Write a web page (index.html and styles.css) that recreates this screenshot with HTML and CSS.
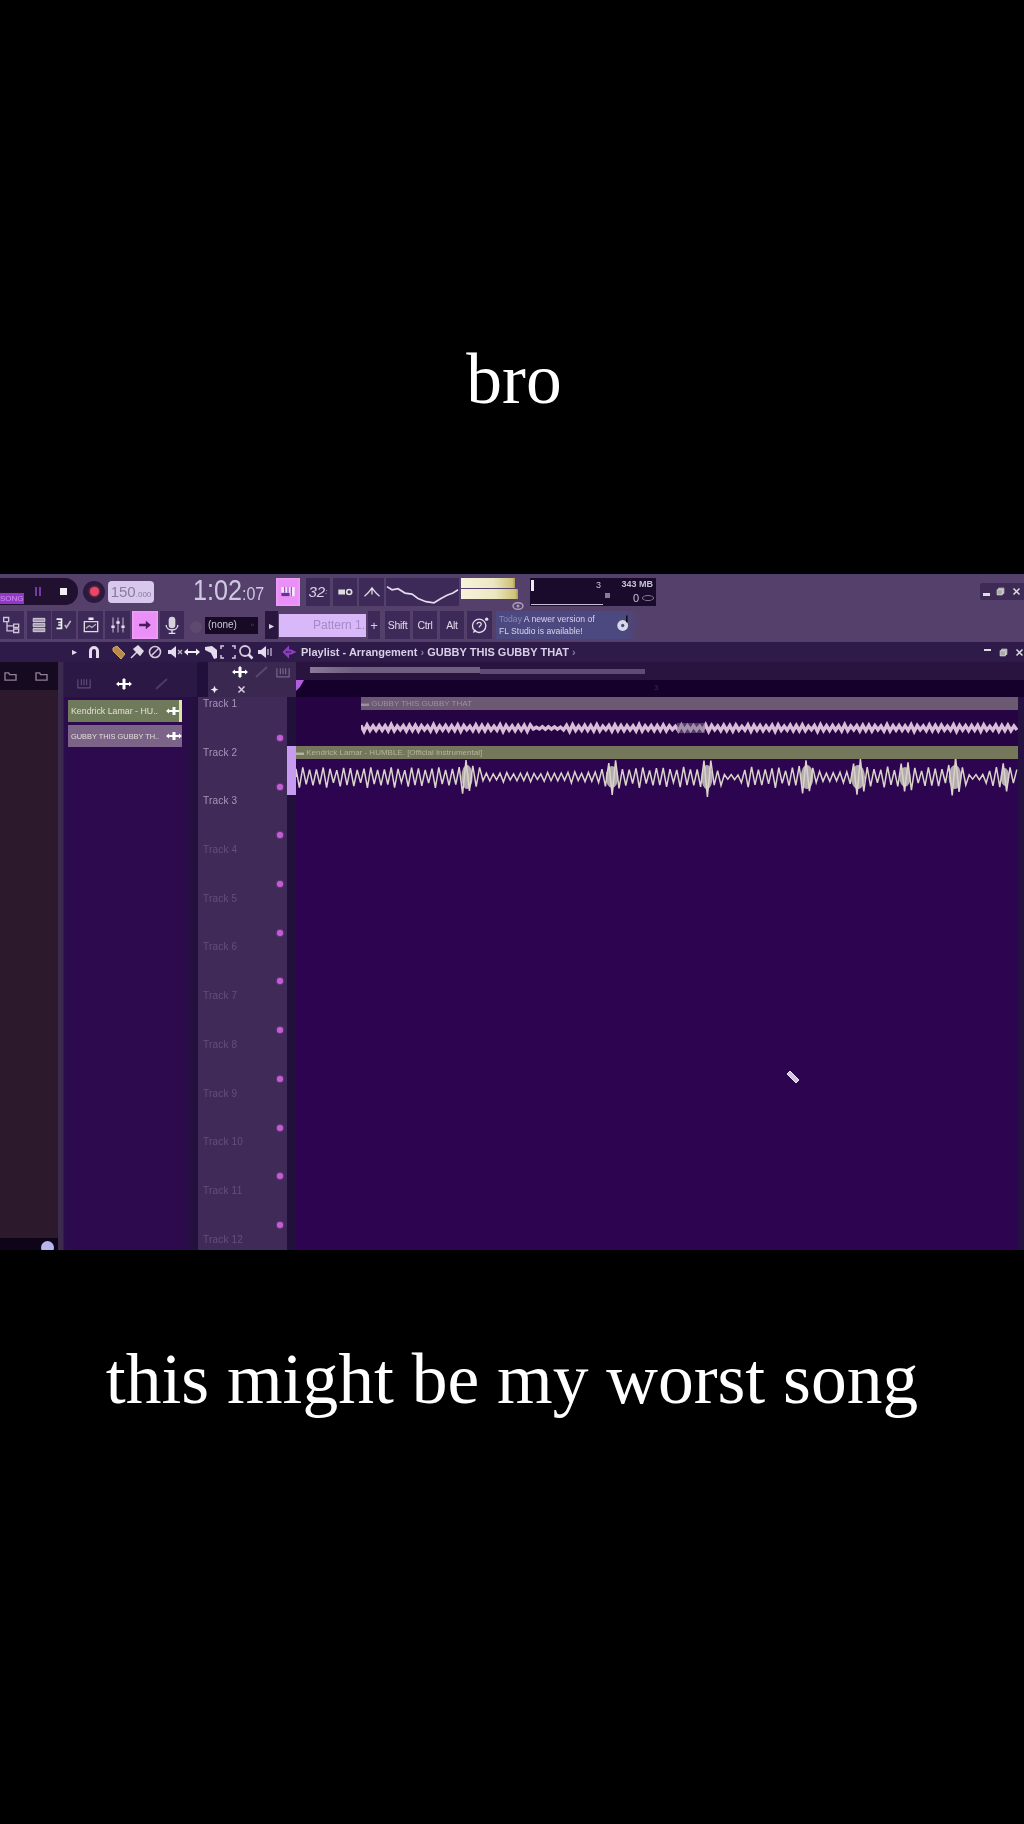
FILE: index.html
```html
<!DOCTYPE html>
<html lang="en">
<head>
<meta charset="utf-8">
<title>this might be my worst song</title>
<link rel="stylesheet" href="styles.css">
</head>
<body>
<div class="page">
  <div class="cap cap-top">bro</div>

  <div class="daw">
    <div class="toolbar">
      <div class="row row1">
        <div class="transport">
          <span class="song">SONG</span>
          <span class="pause"></span>
          <span class="stop"></span>
        </div>
        <div class="rec ml5"><span></span></div>
        <div class="tempo ml3">150<small>.000</small></div>
        <div class="time"><span>1:02<small>:07</small></span></div>
        <div class="btn hot w24 ml13"><svg viewBox="0 0 24 24"><path d="M4 6h16v11H4z" fill="#f9e6ff"/><path d="M4 13h10v4H4z" fill="#6b2f9c"/><path d="M8 6v7M12 6v7M16 6v11" stroke="#a04ac0" stroke-width="1.5"/></svg></div>
        <div class="btn w24 ml6 btn-text">32<small>:</small></div>
        <div class="btn w24 ml3"><svg viewBox="0 0 24 24"><path d="M4 9h8v6H4z" fill="#ddd"/><circle cx="17" cy="12" r="3" fill="none" stroke="#ddd" stroke-width="2"/></svg></div>
        <div class="btn w25 ml2"><svg viewBox="0 0 24 24"><path d="M3 17C8 13 10 10 12 7c2 3 4 6 9 10M12 7v8" fill="none" stroke="#ddd" stroke-width="1.6"/></svg></div>
        <div class="btn w73 ml2"><svg class="fill" viewBox="0 0 73 26" preserveAspectRatio="none"><path d="M1 8l5 3 6-1 7 4 7 1 6 4 8 3 8 1 7-4 6-3 6-2 5-3" fill="none" stroke="#e6dcef" stroke-width="1.6"/></svg></div>
        <div class="meter ml2"><span></span><span></span><svg class="eye" viewBox="0 0 12 8"><ellipse cx="6" cy="4" rx="5" ry="3.3" fill="none" stroke="#a99bb8" stroke-width="1.5"/><circle cx="6" cy="4" r="1.5" fill="#a99bb8"/></svg></div>
        <div class="cpu ml12">
          <span class="cpu-tick"></span>
          <span class="cpu-poly">3</span>
          <span class="cpu-mem">343 MB</span>
          <span class="cpu-dot"></span>
          <span class="cpu-zero">0</span>
          <span class="cpu-oval"></span>
          <span class="cpu-line"></span>
        </div>
        <div class="winctl">
          <span class="wmin"></span>
          <svg viewBox="0 0 12 12"><path d="M1.5 3.5h7v7h-7zM3.5 3.5v-2h7v7h-2" fill="#aaa" stroke="#ddd"/></svg>
          <svg viewBox="0 0 12 12"><path d="M2 2l8 8M10 2l-8 8" stroke="#ddd" stroke-width="2"/></svg>
        </div>
      </div>

      <div class="row row2">
        <div class="btn w24"><svg viewBox="0 0 24 24"><path d="M2 3h6v5H2zM6 8v5h8M6 13v6h8M14 11h6v4h-6zM14 17h6v4h-6z" fill="none" stroke="#cfc4d8" stroke-width="1.6"/></svg></div>
        <div class="btn w24 ml3"><svg viewBox="0 0 24 24"><path d="M5 4h14v4H5zM5 10h14v4H5zM5 16h14v4H5z" fill="#a89ab4" stroke="#ddd" stroke-width="1"/></svg></div>
        <div class="btn w24 ml1"><svg viewBox="0 0 24 24"><path d="M3 5h6v4H5M9 9v3H5M9 12v4H3" fill="none" stroke="#eee" stroke-width="2"/><path d="M13 12l2 3 5-8" fill="none" stroke="#bbb" stroke-width="2"/></svg></div>
        <div class="btn w25 ml2"><svg viewBox="0 0 24 24"><path d="M4 8h16v12H4z" fill="none" stroke="#ddd" stroke-width="1.6"/><path d="M9 3h6v3H9z" fill="#eee"/><path d="M6 16l4-3 3 2 5-4" fill="none" stroke="#bbb" stroke-width="1.4"/></svg></div>
        <div class="btn w25 ml2"><svg viewBox="0 0 24 24"><path d="M6 3v18M12 3v18M18 3v18" stroke="#a99bb8" stroke-width="1.5"/><path d="M4 14h4M10 9h4M16 14h4" stroke="#e6dcef" stroke-width="3"/></svg></div>
        <div class="btn hot w26 ml2"><svg viewBox="0 0 24 24"><path d="M5 10.500h8V7l6 5-6 5v-3.500H5z" fill="#4a1a5e"/></svg></div>
        <div class="btn w24 ml2"><svg viewBox="0 0 24 24"><rect x="8" y="2" width="8" height="14" rx="4" fill="#d8d0dd"/><path d="M5 12c0 8 14 8 14 0M12 18v4M8 22h8" fill="none" stroke="#e8e0ee" stroke-width="1.600"/></svg></div>
        <span class="dim-circle ml6"></span>
        <div class="none ml3">(none)<i>◦</i></div>
        <div class="btn w13 ml7 small-arrow">▸</div>
        <div class="pattern ml1">Pattern 1.</div>
        <div class="btn w12 ml2 plus">+</div>
        <div class="btn w25 ml5 key">Shift</div>
        <div class="btn w24 ml3 key">Ctrl</div>
        <div class="btn w24 ml3 key">Alt</div>
        <div class="btn w25 ml3"><svg viewBox="0 0 24 24"><circle cx="11" cy="13" r="8" fill="none" stroke="#e6dcef" stroke-width="1.600"/><path d="M4 21l3-3" stroke="#e6dcef" stroke-width="1.600"/><path d="M8.500 11c0-3 5-3 5 0 0 2-2.500 2-2.500 4" fill="none" stroke="#e6dcef" stroke-width="1.500"/><circle cx="20" cy="5" r="2" fill="#e6dcef"/></svg></div>
        <div class="news ml4">
          <p class="news-text"><span>Today</span> A newer version of<br>FL Studio is available!</p>
          <svg class="disc" viewBox="0 0 18 22"><circle cx="8" cy="14" r="6.500" fill="#d8d8e8"/><circle cx="8" cy="14" r="2" fill="#4e4a80"/><path d="M13 2v8" stroke="#111" stroke-width="2"/></svg>
        </div>
      </div>
    </div>

    <div class="titlebar">
      <span class="ticon t-arrow">▸</span>
      <svg class="ticon ml4" viewBox="0 0 16 16"><path d="M3 14V7a5 5 0 0 1 10 0v7h-3V7a2 2 0 0 0-4 0v7z" fill="#e4dcee"/></svg>
      <svg class="ticon ml9" viewBox="0 0 16 16"><path d="M2 4l4-2 8 8-4 5-8-8z" fill="#b98a4a" stroke="#d8a860"/></svg>
      <svg class="ticon ml2" viewBox="0 0 16 16"><path d="M2 14l6-6M5 5l4-3 5 5-3 4z" fill="#e0d8e8" stroke="#e0d8e8" stroke-width="1.500"/></svg>
      <svg class="ticon ml2" viewBox="0 0 16 16"><circle cx="8" cy="8" r="5.500" fill="none" stroke="#d4cada" stroke-width="1.600"/><path d="M4 12l8-8" stroke="#d4cada" stroke-width="1.600"/></svg>
      <svg class="ticon ml4" viewBox="0 0 16 16"><path d="M1 6h3l5-4v12l-5-4H1z" fill="#e4dcee"/><path d="M11 6l4 4M15 6l-4 4" stroke="#bbb" stroke-width="1.300"/></svg>
      <svg class="ticon ml1" viewBox="0 0 16 16"><path d="M0 8l4-3.500v7zM16 8l-4-3.500v7zM4 7h8v2H4z" fill="#eee"/></svg>
      <svg class="ticon ml3" viewBox="0 0 16 16"><path d="M2 3l7-1 5 4v8l-3 1-3-6-6-3z" fill="#e4dcee"/></svg>
      <svg class="ticon ml1" viewBox="0 0 16 16"><path d="M1 5V2h3M12 2h3v3M15 11v3h-3M4 14H1v-3" fill="none" stroke="#d4cada" stroke-width="1.500"/></svg>
      <svg class="ticon ml2" viewBox="0 0 16 16"><circle cx="7" cy="7" r="5" fill="none" stroke="#d4cada" stroke-width="1.800"/><path d="M10.500 10.500l4 4" stroke="#e4dcee" stroke-width="2.500"/></svg>
      <svg class="ticon ml3" viewBox="0 0 16 16"><path d="M1 6h3l5-4v12l-5-4H1z" fill="#e4dcee"/><path d="M11 5v6M14 4v8" stroke="#9a8ca8" stroke-width="1.800"/></svg>
      <svg class="ticon ml8" viewBox="0 0 16 16"><path d="M3 8l4-4v2.500h3L13 8l-3 1.500H7V12z" fill="none" stroke="#8d3fc0" stroke-width="2.200"/></svg>
      <span class="crumbs ml4">Playlist - Arrangement <i>›</i> GUBBY THIS GUBBY THAT <i>›</i></span>
      <div class="winctl2">
        <span class="wmin2"></span>
        <svg viewBox="0 0 12 12"><path d="M1.500 3.500h7v7h-7zM3.500 3.500v-2h7v7h-2" fill="#aaa" stroke="#ddd"/></svg>
        <svg viewBox="0 0 12 12"><path d="M2 2l8 8M10 2l-8 8" stroke="#ddd" stroke-width="2"/></svg>
      </div>
    </div>

    <div class="main">
      <aside class="browser">
        <div class="browser-head">
          <svg viewBox="0 0 14 12"><path d="M1 2h4l1 2h7v6H1z" fill="none" stroke="#8d7f96" stroke-width="1.500"/></svg>
          <svg viewBox="0 0 14 12"><path d="M1 2h4l1 2h7v6H1z" fill="none" stroke="#8d7f96" stroke-width="1.500"/></svg>
        </div>
        <div class="browser-fill"></div>
        <div class="browser-foot"><span></span></div>
      </aside>
      <div class="sep"></div>
      <section class="picker">
        <div class="picker-head">
          <svg class="ph-grid" viewBox="0 0 16 12"><path d="M1 1v10h14V1M5 1v7M8 1v7M11 1v7" fill="none" stroke="#5d4a74" stroke-width="1.400"/></svg>
          <svg class="move" viewBox="0 0 16 12"><path d="M0 6l3-2.500v5zM16 6l-3-2.500v5zM3 5h10v2H3zM6.500 2h3v8h-3zM8 0L6 2h4zM8 12l-2-2h4z" fill="#fff"/></svg>
          <svg class="ph-pen" viewBox="0 0 16 12"><path d="M2 11l11-10" stroke="#4e3c62" stroke-width="2"/></svg>
        </div>
        <div class="clip clip-a"><span>Kendrick Lamar - HU..</span><svg class="move" viewBox="0 0 16 12"><path d="M0 6l3-2.500v5zM16 6l-3-2.500v5zM3 5h10v2H3zM6.500 2h3v8h-3z" fill="#fff"/></svg><b></b></div>
        <div class="clip clip-b"><span>GUBBY THIS GUBBY TH..</span><svg class="move" viewBox="0 0 16 12"><path d="M0 6l3-2.500v5zM16 6l-3-2.500v5zM3 5h10v2H3zM6.500 2h3v8h-3z" fill="#fff"/></svg></div>
      </section>
      <section class="tracks">
        <div class="tracks-head">
          <div class="th-row">
            <svg class="move th-move" viewBox="0 0 16 12"><path d="M0 6l3-2.500v5zM16 6l-3-2.500v5zM3 5h10v2H3zM6.500 2h3v8h-3zM8 0L6 2h4zM8 12l-2-2h4z" fill="#fff"/></svg>
            <svg class="th-pen" viewBox="0 0 16 12"><path d="M2 11l11-10" stroke="#5a4870" stroke-width="2"/></svg>
            <svg class="th-grid" viewBox="0 0 16 12"><path d="M1 1v10h14V1M5 1v7M8 1v7M11 1v7" fill="none" stroke="#76648a" stroke-width="1.400"/></svg>
          </div>
          <div class="th-row th-row2">
            <svg class="th-dot" viewBox="0 0 12 12"><path d="M6 1l1.500 3.500L11 6 7.500 7.500 6 11 4.500 7.500 1 6l3.500-1.500z" fill="#f0e8f6"/></svg>
            <svg class="th-x" viewBox="0 0 12 12"><path d="M2 2l8 8M10 2l-8 8" stroke="#d8cfe4" stroke-width="2"/></svg>
          </div>
        </div>
        <div class="track on"><span>Track 1</span><i></i></div>
        <div class="track on"><span>Track 2</span><i></i></div>
        <div class="track on"><span>Track 3</span><i></i></div>
        <div class="track"><span>Track 4</span><i></i></div>
        <div class="track"><span>Track 5</span><i></i></div>
        <div class="track"><span>Track 6</span><i></i></div>
        <div class="track"><span>Track 7</span><i></i></div>
        <div class="track"><span>Track 8</span><i></i></div>
        <div class="track"><span>Track 9</span><i></i></div>
        <div class="track"><span>Track 10</span><i></i></div>
        <div class="track"><span>Track 11</span><i></i></div>
        <div class="track"><span>Track 12</span><i></i></div>
      </section>
      <section class="playlist">
        <div class="scrollrow"><span class="thumb-a"></span><span class="thumb-b"></span></div>
        <div class="ruler"><span class="marker"></span><em>3</em></div>
        <div class="lanes">
          <div class="lane lane-a">
            <div class="clip-head clip-head-a"><span>▬ GUBBY THIS GUBBY THAT</span></div>
            <svg class="wave" id="wave-a" viewBox="0 0 652 22" preserveAspectRatio="none"></svg>
            <span class="wave-tag"></span>
          </div>
          <div class="lane lane-b">
            <span class="lane-mark"></span>
            <div class="clip-head clip-head-b"><span>▬ Kendrick Lamar - HUMBLE. [Official Instrumental]</span></div>
            <svg class="wave" id="wave-b" viewBox="0 0 722 38" preserveAspectRatio="none"></svg>
          </div>
          <svg class="cursor" viewBox="0 0 16 16"><path d="M3 5l3-3 9 9-3 3z" fill="#cfc6dc" stroke="#f0eaf6"/></svg>
        </div>
      </section>
    </div>
  </div>

  <div class="cap cap-bottom">this might be my worst song</div>
</div>
<script src="app.js"></script>
</body>
</html>
```

FILE: styles.css
```css
* { box-sizing: border-box; }
html, body { margin: 0; padding: 0; background: #000; }
.page { width: 1024px; height: 1824px; background: #000; overflow: hidden; }

.cap { color: #fff; font-family: "Liberation Serif", serif; font-size: 71.5px; line-height: 80px; text-align: center; }
.cap-top { height: 574px; padding: 339px 0 0 4px; }
.cap-bottom { padding-top: 89px; }

.daw { height: 676px; width: 1024px; overflow: hidden; font-family: "Liberation Sans", Arial, sans-serif; color: #ddd; filter: blur(0.75px); background: #2c0450; }

.ml1 { margin-left: 1px; } .ml2 { margin-left: 2px; } .ml3 { margin-left: 3px; } .ml4 { margin-left: 4px; }
.ml5 { margin-left: 5px; } .ml6 { margin-left: 6px; } .ml7 { margin-left: 7px; } .ml8 { margin-left: 8px; }
.ml9 { margin-left: 9px; } .ml12 { margin-left: 12px; } .ml13 { margin-left: 13px; }
.w12 { width: 12px; } .w13 { width: 13px; } .w24 { width: 24px; } .w25 { width: 25px; } .w26 { width: 26px; } .w73 { width: 73px; }

.toolbar { height: 68px; background: #54406a; padding-top: 3px; }
.row { display: flex; align-items: center; }
.row1 { height: 29px; }
.row2 { height: 30px; margin-top: 4px; }

.btn { height: 28px; background: #3e2a58; display: flex; align-items: center; justify-content: center; flex: none; }
.btn svg { width: 20px; height: 20px; }
.btn svg.fill { width: 100%; height: 100%; }
.btn.hot { background: #ea8ff6; box-shadow: 0 0 3px #f3b6fb inset; }
.btn-text { font-size: 15px; font-style: italic; color: #dcd2e6; }
.btn-text small { font-size: 8px; }
.key { font-size: 10.5px; letter-spacing: -.3px; color: #e2d8ea; }
.plus { font-size: 13px; color: #d8cfe4; }
.small-arrow { font-size: 10px; color: #e0d8e8; background: #2a1740; }

.transport { width: 78px; height: 27px; background: #21102f; border-radius: 0 13px 13px 0; display: flex; align-items: center; flex: none; }
.song { width: 24px; height: 11px; background: #8f39c6; margin-top: 14px; color: #d68ff0; font-size: 8px; line-height: 11px; overflow: hidden; }
.pause { width: 6px; height: 9px; border-left: 2px solid #6e3fa0; border-right: 2px solid #6e3fa0; margin-left: 11px; }
.stop { width: 7px; height: 7px; background: #f2eef6; margin-left: 19px; }
.rec { width: 22px; height: 22px; border-radius: 50%; background: #2b1a3e; display: flex; align-items: center; justify-content: center; flex: none; }
.rec span { width: 9px; height: 9px; border-radius: 50%; background: #ea4763; box-shadow: 0 0 3px #ea4763; }
.tempo { width: 46px; height: 22px; background: #d9c8ee; border-radius: 4px; color: #8a7a9e; font-size: 15px; line-height: 22px; text-align: center; flex: none; }
.tempo small { font-size: 8px; }
.time { margin-left: 39px; width: 70px; flex: none; font-size: 30px; line-height: 29px; color: #cfc8e2; white-space: nowrap; }
.time span { display: inline-block; transform: scaleX(.84); transform-origin: left center; font-weight: 400; }
.time small { font-size: 19px; }

.meter { width: 57px; height: 28px; display: flex; flex-direction: column; gap: 1px; position: relative; flex: none; }
.meter span { height: 10px; background: linear-gradient(90deg, #f7f3dc, #ece7c2 60%, #cfc278 95%, #a89a58); }
.meter span:first-child { width: 54px; }
.eye { position: absolute; right: -6px; bottom: -4px; width: 12px; height: 8px; }

.cpu { width: 126px; height: 28px; background: #1a0a2c; position: relative; flex: none; font-size: 9px; color: #c8c0d4; }
.cpu span { position: absolute; }
.cpu-tick { left: 1px; top: 2px; width: 3px; height: 11px; background: #efe9f4; }
.cpu-poly { left: 66px; top: 2px; }
.cpu-mem { right: 3px; top: 1px; white-space: nowrap; font-weight: 700; font-size: 9px; }
.cpu-dot { left: 75px; top: 15px; width: 5px; height: 5px; background: #8a7a98; }
.cpu-zero { left: 103px; top: 14px; font-size: 11px; }
.cpu-oval { right: 2px; top: 17px; width: 12px; height: 6px; border: 1px solid #8a7a98; border-radius: 50%; }
.cpu-line { left: 1px; top: 26px; width: 72px; height: 1px; background: #c8c0d4; }

.winctl { margin-left: auto; width: 44px; height: 17px; background: #3d2a55; display: flex; align-items: center; justify-content: space-around; border-radius: 2px 0 0 2px; }
.winctl svg { width: 9px; height: 9px; }
.wmin { width: 7px; height: 3px; background: #ddd; margin-top: 6px; }

.dim-circle { width: 12px; height: 12px; border-radius: 50%; background: #5c4a70; flex: none; margin-top: 3px; }
.none { width: 53px; height: 17px; background: #160a24; color: #cfc6da; font-size: 10px; line-height: 15px; padding-left: 3px; position: relative; flex: none; }
.none i { position: absolute; right: 4px; top: 0; color: #6d5c80; font-style: normal; }
.pattern { width: 87px; height: 23px; background: #d8b8f8; color: #a68ac6; font-size: 12px; line-height: 23px; text-align: right; flex: none; padding-right: 1px; }
.news { width: 144px; height: 28px; background: linear-gradient(90deg, #4c4880 0 90%, #54406a); display: flex; align-items: center; flex: none; position: relative; }
.news-text { margin: 0 0 0 3px; font-size: 8.6px; line-height: 12px; color: #d8d4ec; white-space: nowrap; }
.news-text span { color: #8a88b8; }
.disc { width: 15px; height: 20px; position: absolute; right: 9px; top: 2px; }

.titlebar { height: 20px; background: #2f1b4a; display: flex; align-items: center; padding-left: 72px; position: relative; }
.ticon { width: 16px; height: 16px; flex: none; }
.t-arrow { width: 10px; font-size: 10px; line-height: 16px; color: #e4dcee; }
.crumbs { font-size: 11px; font-weight: 700; color: #d8cfe6; white-space: nowrap; }
.crumbs i { font-style: normal; color: #8b7aa0; }
.winctl2 { margin-left: auto; width: 40px; display: flex; align-items: center; justify-content: space-between; }
.winctl2 svg { width: 9px; height: 9px; }
.wmin2 { width: 7px; height: 2px; background: #ddd; margin-bottom: 4px; }

.main { display: grid; grid-template-columns: 58px 6px 133px 99px 728px; grid-template-rows: 588px; height: 588px; overflow: hidden; }

.browser { display: flex; flex-direction: column; min-height: 0; }
.browser-head { height: 28px; background: #160a20; display: flex; align-items: center; gap: 18px; padding-left: 4px; flex: none; }
.browser-head svg { width: 13px; height: 11px; }
.browser-fill { flex: 1; background: #2c1a2c; }
.browser-foot { height: 12px; background: #0e0618; position: relative; overflow: hidden; flex: none; }
.browser-foot span { position: absolute; left: 41px; top: 3px; width: 13px; height: 13px; border-radius: 50%; background: #b8b4ee; }
.sep { background: linear-gradient(90deg, #3c2b4f 0 80%, #2a1642); }

.picker { background: linear-gradient(90deg, #2a0e4a 0, #2d0a4d 6px, #2d0a4d 88%, #241040 97%, #21123a); }
.picker-head { height: 35px; background: #2c1845; display: flex; align-items: center; padding-top: 8px; }
.move { width: 16px; height: 12px; flex: none; }
.ph-grid { width: 14px; height: 11px; margin-left: 13px; }
.picker-head .move { margin-left: 25px; }
.ph-pen { width: 16px; height: 12px; margin-left: 22px; }
.clip { margin: 3px 0 0 4px; width: 114px; height: 22px; display: flex; align-items: center; position: relative; color: #e4dfd6; }
.clip span { white-space: nowrap; margin-left: 3px; width: 92px; flex: none; }
.clip .move { margin-left: 3px; }
.clip-a { background: #6f7a5a; font-size: 8.8px; }
.clip-a b { position: absolute; right: 0; top: 0; bottom: 0; width: 3px; background: #dfe6a4; }
.clip-b { background: #7c6388; margin-top: 3px; font-size: 7.4px; }

.tracks { background: #20103a; overflow: hidden; min-height: 0; }
.tracks-head { height: 35px; margin-left: 11px; background: #3a2850; }
.th-row { height: 20px; display: flex; align-items: center; }
.th-move { margin-left: 24px; }
.th-pen { width: 16px; height: 12px; margin-left: 6px; }
.th-grid { width: 14px; height: 11px; margin-left: 6px; }
.th-row2 { height: 15px; }
.th-dot { width: 9px; height: 9px; margin-left: 2px; }
.th-x { width: 9px; height: 9px; margin-left: 18px; }
.track { height: 48.7px; margin: 0 9px 0 1px; background: #3f2a58; position: relative; padding: 0 0 0 5px; }
.track span { display: block; font-size: 10px; line-height: 14px; letter-spacing: .2px; color: #64507a; }
.track.on span { color: #a898b8; }
.track i { position: absolute; right: 4px; top: 38px; width: 6px; height: 6px; border-radius: 50%; background: #c45cd8; box-shadow: 0 0 2px #c45cd8; }

.playlist { display: flex; flex-direction: column; position: relative; min-width: 0; min-height: 0; }
.scrollrow { height: 18px; background: #28143f; position: relative; flex: none; }
.thumb-a { position: absolute; left: 14px; top: 5px; width: 170px; height: 6px; background: linear-gradient(90deg, #8a7a98, #6f5f80 25%); }
.thumb-b { position: absolute; left: 184px; top: 7px; width: 165px; height: 5px; background: #5e4c72; }
.ruler { height: 17px; background: #14002a; position: relative; flex: none; }
.marker { position: absolute; left: 0; top: 0; border: 4px solid transparent; border-top: 7px solid #b45ce0; border-left-color: #b45ce0; }
.ruler em { position: absolute; left: 358px; top: 3px; font-size: 8px; font-style: normal; color: #3c2a52; }
.lanes { flex: 1; position: relative; border-right: 6px solid #231240; background-color: #2c0450; }
.lane { height: 48.7px; position: relative; }
.clip-head { height: 13px; font-size: 8px; line-height: 13px; white-space: nowrap; overflow: hidden; }
.clip-head-a { margin-left: 65px; background: #6b5a72; color: #9d8ea6; }
.clip-head-b { background: #74775a; color: #b5b49e; }
.lane-a { background: #260342; }
.lane-a .wave { display: block; margin: 10px 0 0 65px; width: 657px; height: 22px; }
.wave-tag { position: absolute; left: 381px; top: 26px; width: 28px; height: 10px; background: rgba(120, 104, 136, .55); }
.lane-b .wave { display: block; width: 722px; height: 38px; }
.lane-mark { position: absolute; left: -9px; top: 0; width: 9px; height: 49px; background: #c79cf0; }
.cursor { position: absolute; left: 488px; top: 372px; width: 16px; height: 16px; }
```

FILE: app.js
```js
// Draws the two audio clips as zigzag waveforms.
var SVG_NS = 'http://www.w3.org/2000/svg';
function peaks(x, list) {
  var amp = 0;
  list.forEach(function (p) {
    var d = Math.abs(x - p[0]) / p[1];
    if (d < 1) amp = Math.max(amp, p[2] * (1 - d * d));
  });
  return amp;
}
function wobble(x) {
  return 0.75 + 0.25 * Math.sin(x * 0.37) * Math.cos(x * 0.091);
}
function build(id, width, mid, step, base, list, colour, weight) {
  var d = 'M0 ' + mid;
  var up = true;
  for (var x = 0; x <= width; x += step) {
    var a = base(x) * wobble(x) + peaks(x, list);
    d += 'L' + x.toFixed(1) + ' ' + (mid + (up ? -a : a)).toFixed(1);
    up = !up;
  }
  var svg = document.getElementById(id);
  var path = document.createElementNS(SVG_NS, 'path');
  path.setAttribute('d', d);
  path.setAttribute('fill', 'none');
  path.setAttribute('stroke', colour);
  path.setAttribute('stroke-width', weight);
  svg.appendChild(path);
  list.forEach(function (p) {
    var blob = document.createElementNS(SVG_NS, 'ellipse');
    blob.setAttribute('cx', p[0]);
    blob.setAttribute('cy', mid);
    blob.setAttribute('rx', p[1] * 0.7);
    blob.setAttribute('ry', p[2] + 3);
    blob.setAttribute('fill', colour);
    blob.setAttribute('opacity', '0.8');
    svg.appendChild(blob);
  });
}
build('wave-a', 652, 8, 3, function (x) {
  return x > 170 && x < 200 ? 1.5 : x > 300 && x < 340 ? 3 : 3.4;
}, [], '#d8bcd8', 3.4);
build('wave-b', 722, 18, 3.4, function (x) {
  if (x > 185 && x < 265) return 5;
  if (x > 265 && x < 305) return 6;
  if (x > 425 && x < 445) return 3;
  if (x > 515 && x < 555) return 6;
  if (x > 670 && x < 690) return 3;
  return 11;
}, [[171, 8, 9], [316, 9, 8], [411, 8, 9], [511, 9, 9], [562, 10, 9], [609, 8, 7], [659, 9, 9], [709, 6, 6]], '#d8d4c8', 1.5);
```
